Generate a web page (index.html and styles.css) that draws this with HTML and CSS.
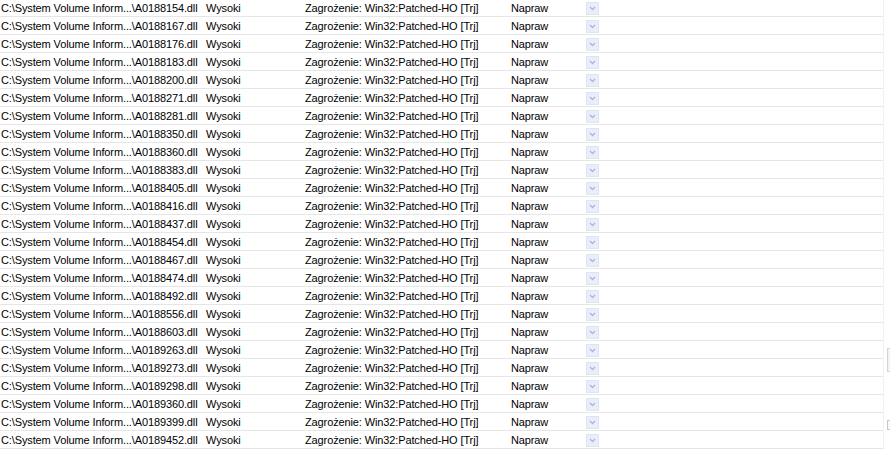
FILE: index.html
```html
<!DOCTYPE html>
<html lang="pl">

<head>
    <meta charset="UTF-8">
    <title>Wyniki skanowania</title>
    <link rel="stylesheet" href="styles.css">
</head>

<body>
    <div class="lista" id="lista"></div>
    <div class="pasek">
        <div class="suwak"></div>
        <div class="strzalka"></div>
    </div>

    <script>
        let lista = document.querySelector("#lista");
        let pliki = [
            "A0188154", "A0188167", "A0188176", "A0188183", "A0188200", "A0188271", "A0188281",
            "A0188350", "A0188360", "A0188383", "A0188405", "A0188416", "A0188437", "A0188454",
            "A0188467", "A0188474", "A0188492", "A0188556", "A0188603", "A0189263", "A0189273",
            "A0189298", "A0189360", "A0189399", "A0189452"
        ];

        pliki.forEach(function (nazwa) {
            let wiersz = document.createElement("div");
            wiersz.className = "wiersz";
            wiersz.innerHTML =
                '<span class="sciezka">C:\\System Volume Inform...\\' + nazwa + '.dll</span>' +
                '<span class="poziom">Wysoki</span>' +
                '<span class="opis">Zagrożenie: Win32:Patched-HO [Trj]</span>' +
                '<span class="akcja">Napraw</span>' +
                '<span class="wybor"><svg width="13" height="13" viewBox="0 0 13 13">' +
                '<rect x="0.5" y="0.5" width="12" height="12" fill="#eaeefb" stroke="#dfe4f4"/>' +
                '<polyline points="4,5 6.5,7.5 9,5" fill="none" stroke="#a9b6d6" stroke-width="1.3"/>' +
                '</svg></span>';
            lista.appendChild(wiersz);
        });
    </script>
</body>

</html>
```

FILE: styles.css
```css
body {
    margin: 0;
    display: flex;
    background-color: #ffffff;
    font-family: "Liberation Sans", Arial, sans-serif;
    font-size: 11px;
    letter-spacing: -0.12px;
    color: #000000;
}

.lista {
    width: 883px;
    margin-top: -1px;
}

.wiersz {
    display: flex;
    align-items: center;
    height: 17px;
    border-bottom: 1px solid #e6e6e6;
    white-space: nowrap;
}

.sciezka {
    width: 205px;
    padding-left: 1px;
}

.poziom {
    width: 99px;
}

.opis {
    width: 206px;
}

.akcja {
    width: 75px;
}

.wybor {
    display: flex;
    padding-top: 1px;
}

.pasek {
    flex: 1;
    display: flex;
    flex-direction: column;
    padding-left: 3px;
    border-left: 1px solid #f2f2f2;
}

.suwak {
    margin-top: 348px;
    height: 22px;
    border: 1px solid #d4d4d4;
    border-right: none;
    background-color: #f4f4f4;
}

.strzalka {
    margin-top: 48px;
    height: 8px;
    border: 1px solid #c8c8c8;
    border-right: none;
    background-color: #f8f8f8;
}
```
